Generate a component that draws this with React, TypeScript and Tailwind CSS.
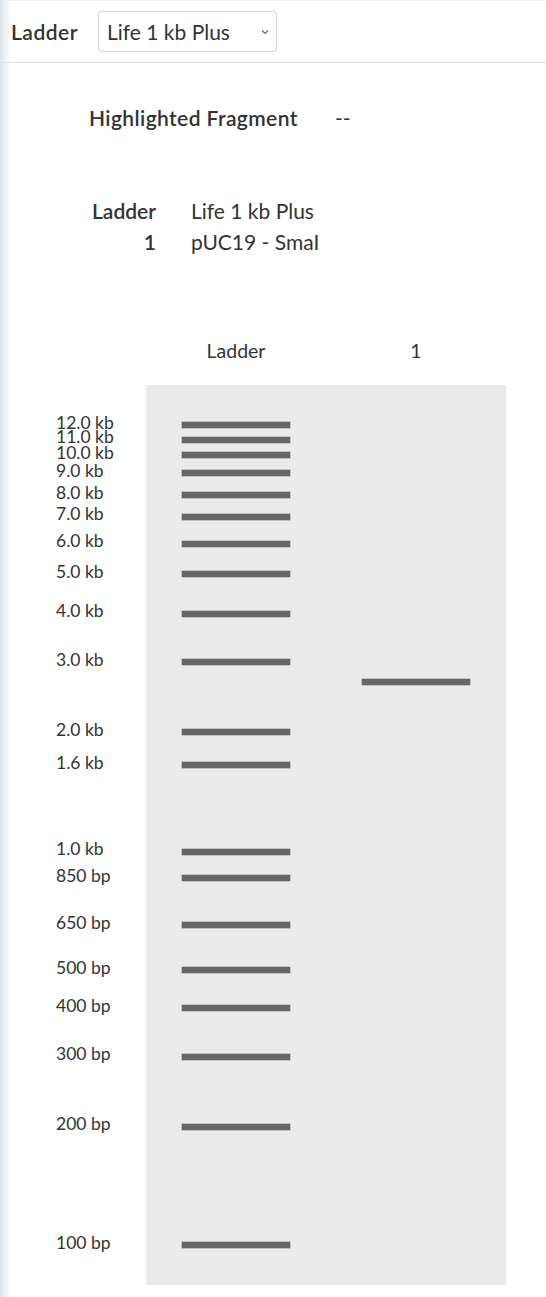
const ladder = [
  { label: "12.0 kb", y: 425 },
  { label: "11.0 kb", y: 439.5 },
  { label: "10.0 kb", y: 455 },
  { label: "9.0 kb", y: 473 },
  { label: "8.0 kb", y: 495 },
  { label: "7.0 kb", y: 516.5 },
  { label: "6.0 kb", y: 543.5 },
  { label: "5.0 kb", y: 574 },
  { label: "4.0 kb", y: 613.5 },
  { label: "3.0 kb", y: 662 },
  { label: "2.0 kb", y: 732 },
  { label: "1.6 kb", y: 765 },
  { label: "1.0 kb", y: 851.5 },
  { label: "850 bp", y: 878 },
  { label: "650 bp", y: 925 },
  { label: "500 bp", y: 970 },
  { label: "400 bp", y: 1008 },
  { label: "300 bp", y: 1056.5 },
  { label: "200 bp", y: 1126.5 },
  { label: "100 bp", y: 1245 },
];

const sampleBands = [{ y: 682 }];

// gel top in page coordinates
const GEL_TOP = 385;
const LANE_HEADER = 46;

function Band({ y }: { y: number }) {
  return (
    <div
      className="absolute left-[36px] w-[108px] h-[6px] bg-[#666666] shadow-[0_0_0_0.5px_#9a9a9a]"
      style={{ top: y - GEL_TOP - 3 }}
    />
  );
}

export default function App() {
  return (
    <div className="min-h-screen w-full bg-[linear-gradient(to_right,#dce4e8_0px,#eef2f4_5px,#ffffff_12px)] font-['Lato','Open_Sans',sans-serif] text-[#333333]">
      {/* Header */}
      <div className="ml-[2px] h-[63px] flex items-center gap-[20px] pl-[9px] border-b border-[#dde1e4] border-t border-t-[#f0f0f0]">
        <span className="text-[21px] font-semibold tracking-[0.5px]">Ladder</span>
        <div className="w-[179px] h-[41px] flex items-center justify-between pl-[8px] pr-[7px] rounded-[3px] border border-[#cdd5d9] bg-white">
          <span className="text-[21px]">Life 1 kb Plus</span>
          <svg width="8" height="6" viewBox="0 0 8 6" className="text-[#666]">
            <path d="M1 1.5l3 3 3-3" fill="none" stroke="currentColor" strokeWidth="1.2" />
          </svg>
        </div>
      </div>

      {/* Info */}
      <div className="pl-[89px] pt-[41px]">
        <div className="flex items-center h-[28px] text-[21px]">
          <span className="font-semibold w-[246px] tracking-[0.4px]">Highlighted Fragment</span>
          <span>--</span>
        </div>
        <div className="mt-[63px] grid grid-cols-[67px_1fr] gap-x-[35px] text-[21px] leading-[31px]">
          <span className="font-semibold text-right">Ladder</span>
          <span>Life 1 kb Plus</span>
          <span className="font-semibold text-right">1</span>
          <span>pUC19 - SmaI</span>
        </div>
      </div>

      {/* Gel */}
      <div className="mt-[82px] flex">
        <div className="relative w-[146px]">
          {ladder.map((b) => (
            <span
              key={b.label}
              className="absolute left-[56px] text-[17.5px] leading-[12px] whitespace-nowrap"
              style={{ top: b.y - GEL_TOP + LANE_HEADER - 6.5 - 2 }}
            >
              {b.label}
            </span>
          ))}
        </div>
        <div className="w-[360px]">
          <div className="flex h-[46px] items-start text-[19.5px] leading-[24px]">
            <div className="w-[180px] text-center">Ladder</div>
            <div className="w-[180px] text-center">1</div>
          </div>
          <div className="flex h-[900px] bg-[#ebebeb]">
            <div className="relative w-[180px]">
              {ladder.map((b) => (
                <Band key={b.label} y={b.y} />
              ))}
            </div>
            <div className="relative w-[180px]">
              {sampleBands.map((b, i) => (
                <Band key={i} y={b.y} />
              ))}
            </div>
          </div>
        </div>
      </div>
    </div>
  );
}
